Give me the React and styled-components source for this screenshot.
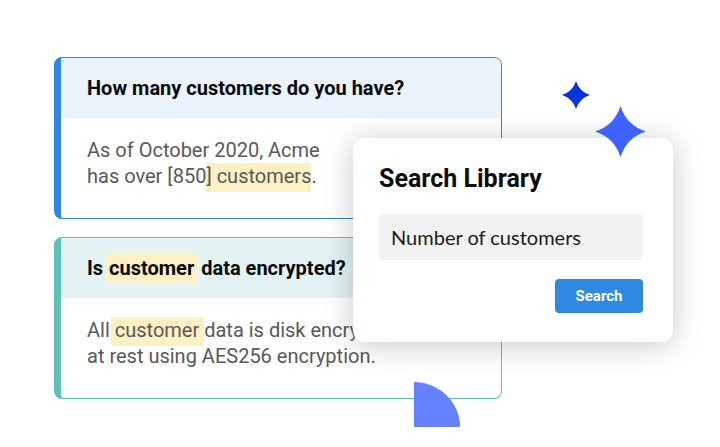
import React from "react";
import styled, { createGlobalStyle } from "styled-components";

const GlobalStyle = createGlobalStyle`
  html, body {
    margin: 0;
    padding: 0;
    background: #ffffff;
  }
  body {
    font-family: Roboto, "Liberation Sans", Arial, sans-serif;
  }
`;

const Page = styled.div`
  position: relative;
  width: 720px;
  height: 447px;
  overflow: hidden;
  background: #fff;
  padding: 57px 0 0 54px;
  box-sizing: border-box;
`;

const CardList = styled.div`
  display: flex;
  flex-direction: column;
  gap: 18px;
  width: 448px;
`;

const Card = styled.div`
  display: flex;
  flex-direction: column;
  height: 162px;
  box-sizing: border-box;
  border: 1px solid ${(p) => p.accent};
  border-left: 7px solid ${(p) => p.accent};
  border-radius: 8px;
  overflow: hidden;
  background: #fff;
`;

const CardHeader = styled.div`
  display: flex;
  align-items: center;
  height: 60px;
  flex-shrink: 0;
  padding-left: 26px;
  background: ${(p) => p.tint};
  font-size: 20px;
  font-weight: 700;
  color: #0a0a0a;
  white-space: pre;
`;

const CardBody = styled.div`
  padding: 19px 26px 0;
  font-size: 20px;
  line-height: 26px;
  color: #595959;
`;

const Mark = styled.span`
  background: #fcf0c4;
  padding: 1px ${(p) => (p.wide ? "5px" : "0")} 4px ${(p) => (p.wide ? "4px" : "0")};
  margin: 0 ${(p) => (p.wide ? "-5px" : "0")} 0 ${(p) => (p.wide ? "-4px" : "0")};
`;

const HeaderMark = styled.span`
  background: #fcf0c4;
  padding: 3px 4px 4px 3px;
  margin: 0 -2px 0 -2px;
`;

const Panel = styled.div`
  position: absolute;
  left: 353px;
  top: 138px;
  width: 320px;
  height: 204px;
  box-sizing: border-box;
  padding: 26px 30px 0 26px;
  background: #fff;
  border-radius: 12px;
  box-shadow: 0 3px 30px rgba(0, 0, 0, 0.22);
  display: flex;
  flex-direction: column;
  z-index: 2;
`;

const PanelTitle = styled.div`
  font-size: 25px;
  line-height: 30px;
  font-weight: 700;
  color: #0d0d0d;
`;

const SearchInput = styled.div`
  margin-top: 20px;
  height: 46px;
  display: flex;
  align-items: center;
  padding-left: 12px;
  background: #f2f2f2;
  border-radius: 4px;
  font-family: Lato, "Open Sans", sans-serif;
  font-size: 20px;
  color: #1a1a1a;
`;

const ButtonRow = styled.div`
  display: flex;
  justify-content: flex-end;
  margin-top: 19px;
`;

const SearchButton = styled.button`
  width: 88px;
  height: 34px;
  border: none;
  border-radius: 4px;
  background: #2e89e0;
  color: #fff;
  font-family: Roboto, sans-serif;
  font-size: 15px;
  font-weight: 700;
  padding: 0;
`;

const Sparkle = styled.svg`
  position: absolute;
  left: ${(p) => p.x}px;
  top: ${(p) => p.y}px;
  z-index: 3;
`;

const QuarterDisc = styled.div`
  position: absolute;
  left: 414px;
  top: 382px;
  width: 46px;
  height: 45px;
  background: #6482ff;
  border-top-right-radius: 46px 45px;
  z-index: 3;
`;

function Star({ x, y, size, color }) {
  return (
    <Sparkle x={x} y={y} width={size} height={size} viewBox="0 0 100 100">
      <path
        d="M50 0 Q62 38 100 50 Q62 62 50 100 Q38 62 0 50 Q38 38 50 0 Z"
        fill={color}
      />
    </Sparkle>
  );
}

export default function App() {
  return (
    <Page>
      <GlobalStyle />
      <CardList>
        <Card accent="#2d88e2">
          <CardHeader tint="#eaf2fc">How many customers do you have?</CardHeader>
          <CardBody>
            As of October 2020, Acme
            <br />
            has over [850<Mark>] customers</Mark>.
          </CardBody>
        </Card>
        <Card accent="#5cc1b6">
          <CardHeader tint="#e3f3f3">
            Is <HeaderMark>customer</HeaderMark> data encrypted?
          </CardHeader>
          <CardBody>
            All <Mark wide>customer</Mark> data is disk encrypted
            <br />
            at rest using AES256 encryption.
          </CardBody>
        </Card>
      </CardList>

      <Panel>
        <PanelTitle>Search Library</PanelTitle>
        <SearchInput>Number of customers</SearchInput>
        <ButtonRow>
          <SearchButton>Search</SearchButton>
        </ButtonRow>
      </Panel>

      <Star x={562} y={81} size={28} color="#0a33dc" />
      <Star x={595} y={106} size={51} color="#3f61ff" />
      <QuarterDisc />
    </Page>
  );
}
